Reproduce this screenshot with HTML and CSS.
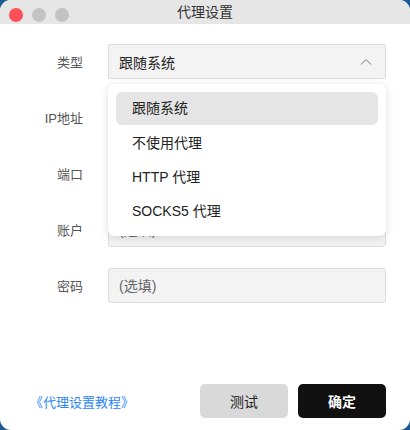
FILE: index.html
```html
<!DOCTYPE html>
<html lang="zh-CN">
<head>
<meta charset="utf-8">
<title>代理设置</title>
<link rel="stylesheet" href="styles.css">
</head>
<body>
<div class="window">
  <div class="titlebar">
    <div class="lights">
      <span class="light red"></span>
      <span class="light grey"></span>
      <span class="light grey"></span>
    </div>
    <div class="title">代理设置</div>
  </div>
  <div class="content">
    <div class="form">
      <label class="label">类型</label>
      <div class="select">
        <span>跟随系统</span>
        <svg class="chev" width="12" height="8" viewBox="0 0 12 8"><path d="M1 6.5 L6 1.5 L11 6.5" fill="none" stroke="#777" stroke-width="1"/></svg>
      </div>
      <label class="label">IP地址</label>
      <input class="input" type="text" placeholder="请输入IP地址">
      <label class="label">端口</label>
      <input class="input" type="text" placeholder="请输入端口">
      <label class="label">账户</label>
      <input class="input" type="text" placeholder="(选填)">
      <label class="label">密码</label>
      <input class="input" type="password" placeholder="(选填)">
    </div>
    <div class="menu">
      <div class="item active">跟随系统</div>
      <div class="item">不使用代理</div>
      <div class="item">HTTP 代理</div>
      <div class="item">SOCKS5 代理</div>
    </div>
    <div class="footer">
      <a class="link" href="#">《代理设置教程》</a>
      <div class="buttons">
        <button class="btn test">测试</button>
        <button class="btn ok">确定</button>
      </div>
    </div>
  </div>
</div>
</body>
</html>
```

FILE: styles.css
```css
* { box-sizing: border-box; }
html, body {
  margin: 0;
  padding: 0;
  width: 410px;
  height: 430px;
  background: #1c5a93;
  overflow: hidden;
}
body {
  font-family: "Liberation Sans", "Noto Sans CJK SC", sans-serif;
  color: #222;
}
.window {
  width: 410px;
  height: 430px;
  background: #fff;
  border-radius: 11px;
  overflow: hidden;
  display: flex;
  flex-direction: column;
}
.titlebar {
  height: 24px;
  background: #e6e6e6;
  position: relative;
  display: flex;
  align-items: center;
  justify-content: center;
  flex-shrink: 0;
}
.lights {
  position: absolute;
  left: 9px;
  top: 8px;
  display: flex;
  gap: 9px;
}
.light {
  width: 14px;
  height: 14px;
  border-radius: 50%;
  display: block;
}
.light.red { background: #fe5157; }
.light.grey { background: #c3c3c3; }
.title {
  font-size: 14px;
  color: #333;
  line-height: 24px;
}
.content {
  position: relative;
  flex: 1;
  display: flex;
  flex-direction: column;
  justify-content: space-between;
}
.form {
  display: grid;
  grid-template-columns: 83px 1fr;
  column-gap: 25px;
  row-gap: 21px;
  padding: 20px 24px 0 0;
  align-items: center;
}
.label {
  text-align: right;
  font-size: 13px;
  color: #555;
}
.select, .input {
  height: 35px;
  background: #f3f3f3;
  border: 1px solid #dcdcdc;
  border-radius: 3px;
  font-family: "Liberation Sans", "Noto Sans CJK SC", sans-serif;
  font-size: 14px;
  padding: 0 10px;
  color: #222;
}
.select {
  display: flex;
  align-items: center;
  justify-content: space-between;
  border-radius: 2px;
}
.chev { margin-right: 3px; }
.input { outline: none; width: 100%; }
.input::placeholder { color: #666; }
.menu {
  position: absolute;
  left: 108px;
  top: 60px;
  width: 278px;
  background: #fff;
  border-radius: 6px;
  box-shadow: 0 2px 10px rgba(0,0,0,0.12), 0 0 2px rgba(0,0,0,0.06);
  padding: 8px;
}
.item {
  height: 34px;
  line-height: 34px;
  padding-left: 16px;
  font-size: 14px;
  color: #222;
  border-radius: 6px;
}
.item.active {
  background: #e5e5e5;
  height: 33px;
  line-height: 33px;
  margin-bottom: 1px;
}
.footer {
  display: flex;
  align-items: center;
  justify-content: space-between;
  padding: 0 24px 12px 30px;
}
.link {
  color: #2a86f5;
  font-size: 13px;
  text-decoration: none;
}
.buttons {
  display: flex;
  gap: 10px;
}
.btn {
  width: 88px;
  height: 34px;
  border: none;
  border-radius: 5px;
  font-family: "Liberation Sans", "Noto Sans CJK SC", sans-serif;
  font-size: 14px;
}
.btn.test { background: #d9d9d9; color: #222; }
.btn.ok { background: #111; color: #fff; font-weight: bold; }
```
